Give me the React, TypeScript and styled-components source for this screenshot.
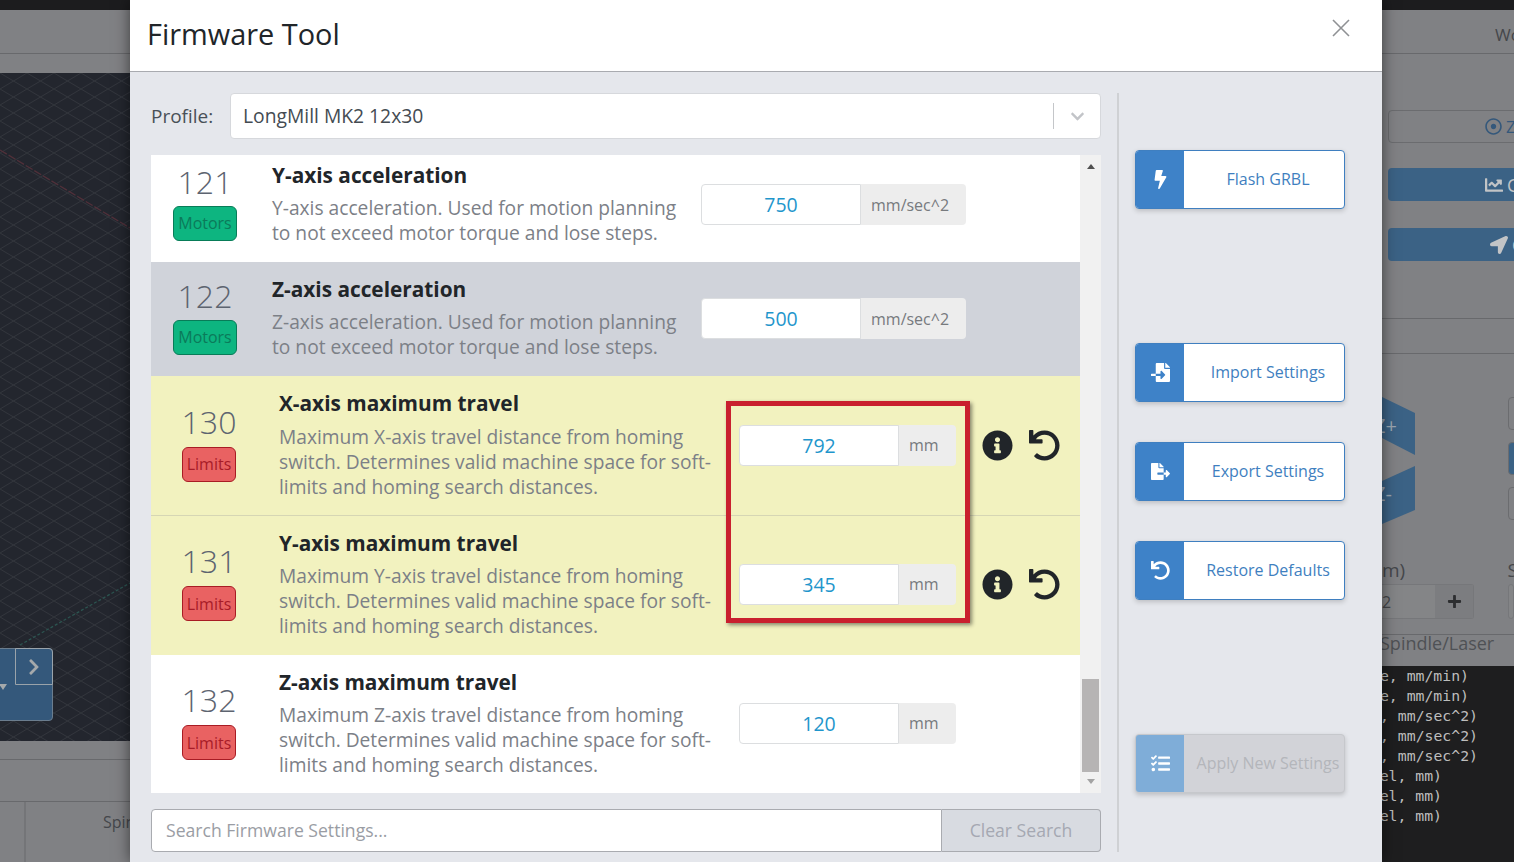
import React from 'react';
import styled, { createGlobalStyle } from 'styled-components';
import {
  FaBolt, FaFileImport, FaFileExport, FaUndo, FaTasks, FaInfoCircle,
  FaChevronRight, FaPlus, FaChartLine, FaLocationArrow, FaRegDotCircle, FaChevronDown,
} from 'react-icons/fa';

const GlobalStyle = createGlobalStyle`
  html, body { margin: 0; padding: 0; overflow: hidden; }
  body { font-family: "Open Sans", "Liberation Sans", sans-serif; background: #808184; }
  * { box-sizing: border-box; }
`;

const Page = styled.div`
  display: flex;
  width: 1514px;
  height: 862px;
  overflow: hidden;
`;

/* dimmed app behind the dialog */
const SidePane = styled.div<{ $width: number }>`
  width: ${p => p.$width}px;
  flex: none;
  display: flex;
  flex-direction: column;
  background: #808184;
  overflow: hidden;
  color: #45474b;
`;

const TopStrip = styled.div`
  height: 10px;
  flex: none;
  background: #1c1c1e;
`;

const PaneHeader = styled.div`
  height: 44px;
  flex: none;
  border-bottom: 1px solid #68696c;
  font-size: 17px;
  line-height: 50px;
  padding-left: 113px;
  white-space: nowrap;
`;

const PaneBand = styled.div`
  height: 19px;
  flex: none;
`;

const Canvas = styled.div`
  position: relative;
  height: 668px;
  flex: none;
  background: #23262e;
`;

const CanvasArt = styled.svg`
  display: block;
  width: 100%;
  height: 100%;
`;

const JogBox = styled.div`
  position: absolute;
  left: -8px;
  top: 575px;
  width: 61px;
  height: 73px;
  background: #34587b;
  border: 1px solid #6b7d8e;
  border-radius: 0 4px 4px 0;
`;

const JogCaret = styled.div`
  position: absolute;
  left: 6px;
  top: 35px;
  width: 0;
  height: 0;
  border: 4px solid transparent;
  border-bottom: none;
  border-top: 6px solid #a5a9ab;
`;

const JogButton = styled.div`
  position: absolute;
  right: -1px;
  top: -1px;
  width: 38px;
  height: 37px;
  display: flex;
  align-items: center;
  justify-content: center;
  background: #34587b;
  border: 1px solid #9aa3aa;
  border-radius: 0 4px 0 0;
  color: #a5a9ab;
  font-size: 18px;
`;

const BottomRail = styled.div`
  height: 19px;
  flex: none;
  border-bottom: 1px solid #68696c;
`;

const BottomMid = styled.div`
  height: 42px;
  flex: none;
  border-bottom: 1px solid #68696c;
`;

const BottomTabs = styled.div`
  flex: 1;
  display: flex;
  align-items: flex-start;
`;

const TabEdge = styled.div`
  width: 26px;
  height: 100%;
  flex: none;
  border-right: 2px solid #747578;
`;

const TabLabel = styled.div`
  margin: 9px 0 0 77px;
  font-size: 16px;
  white-space: nowrap;
`;

/* right pane parts */
const TargetButton = styled.div`
  margin: 56px 0 0 6px;
  width: 200px;
  height: 33px;
  flex: none;
  border: 1px solid #6b6c6f;
  border-radius: 4px;
  display: flex;
  align-items: center;
  padding-left: 96px;
  gap: 4px;
  font-size: 17px;
  color: #34587b;
`;

const ActionBar = styled.div<{ $top: number; $indent: number }>`
  margin: ${p => p.$top}px 0 0 6px;
  width: 200px;
  height: 33px;
  flex: none;
  background: #3b6285;
  border-radius: 4px;
  display: flex;
  align-items: center;
  padding-left: ${p => p.$indent}px;
  gap: 4px;
  font-size: 18px;
  color: #c2c4c6;
`;

const SectionBand = styled.div`
  margin-top: 57px;
  height: 36px;
  flex: none;
  border-top: 1px solid #68696c;
  border-bottom: 1px solid #68696c;
`;

const JogRow = styled.div`
  margin-top: 43px;
  display: flex;
  flex: none;
  height: 127px;
`;

const HexArt = styled.svg`
  width: 33px;
  height: 127px;
  flex: none;
`;

const SmallBoxes = styled.div`
  margin-left: 93px;
  display: flex;
  flex-direction: column;
  gap: 12px;
`;

const SmallBox = styled.div<{ $blue?: boolean }>`
  width: 30px;
  height: 33px;
  border: 1px solid #6b6c6f;
  border-radius: 4px;
  background: ${p => (p.$blue ? '#3b6285' : 'transparent')};
`;

const LabelRow = styled.div`
  margin: 34px 0 2px;
  width: 136px;
  display: flex;
  justify-content: space-between;
  font-size: 19px;
  line-height: 24px;
  flex: none;
`;

const FieldRow = styled.div`
  display: flex;
  flex: none;
  height: 35px;
`;

const SpinField = styled.div`
  width: 92px;
  flex: none;
  display: flex;
  border: 1px solid #76777a;
  border-left: none;
  border-radius: 0 3px 3px 0;
  background: #848587;
  font-size: 16px;
  align-items: center;
`;

const SpinValue = styled.div`
  flex: 1;
`;

const SpinPlus = styled.div`
  width: 38px;
  height: 100%;
  display: flex;
  align-items: center;
  justify-content: center;
  background: #7c7d80;
  color: #2d2e30;
  font-size: 15px;
`;

const OtherField = styled.div`
  margin-left: 34px;
  width: 20px;
  background: #848587;
  border: 1px solid #76777a;
  border-radius: 3px;
`;

const SpindleTab = styled.div`
  margin: 15px 0 0 -2px;
  height: 32px;
  flex: none;
  border-top: 1px solid #68696c;
  font-size: 18px;
  line-height: 16px;
  white-space: nowrap;
  color: #4f5155;
`;

const Console = styled.div`
  flex: 1;
  background: #1e1e1f;
  font-family: "DejaVu Sans Mono", "Liberation Mono", monospace;
  font-size: 14.8px;
  line-height: 20px;
  color: #bdbdbd;
`;

const ConsoleLine = styled.div<{ $end: number }>`
  display: flex;
  justify-content: flex-end;
  padding-right: ${p => p.$end}px;
  white-space: nowrap;
`;

/* the dialog */
const Modal = styled.div`
  position: relative;
  z-index: 2;
  flex: 1;
  height: 862px;
  display: flex;
  flex-direction: column;
  background: #e5e7ec;
  box-shadow: 0 0 14px rgba(0, 0, 0, 0.55);
`;

const ModalHeader = styled.div`
  height: 72px;
  flex: none;
  display: flex;
  align-items: center;
  justify-content: space-between;
  padding: 0 31px 2px 17px;
  background: #fff;
  border-bottom: 1px solid #a9abb0;
`;

const ModalTitle = styled.div`
  font-size: 28.9px;
  color: #212529;
  margin-top: -3px;
`;

const CloseIcon = styled.svg`
  width: 20px;
  height: 20px;
  margin-top: -14px;
`;

const ModalBody = styled.div`
  flex: 1;
  display: flex;
  padding: 21px 0 10px 21px;
`;

const MainColumn = styled.div`
  width: 950px;
  flex: none;
  display: flex;
  flex-direction: column;
  gap: 16px;
`;

const ProfileRow = styled.div`
  height: 46px;
  flex: none;
  display: flex;
  align-items: center;
`;

const ProfileLabel = styled.div`
  width: 79px;
  flex: none;
  font-size: 19px;
  color: #495057;
`;

const ProfileSelect = styled.div`
  flex: 1;
  height: 46px;
  display: flex;
  align-items: center;
  background: #fff;
  border: 1px solid #d6d8dc;
  border-radius: 4px;
  padding-left: 12px;
  font-size: 19.3px;
  color: #444b52;
`;

const SelectValue = styled.div`
  flex: 1;
  padding-bottom: 2px;
`;

const SelectSep = styled.div`
  width: 1px;
  height: 26px;
  background: #c4c6c9;
`;

const SelectCaret = styled.div`
  width: 46px;
  display: flex;
  justify-content: center;
  color: #c2c4c8;
  font-size: 15px;
`;

const ListFrame = styled.div`
  height: 638px;
  flex: none;
  display: flex;
`;

const RowList = styled.div`
  width: 929px;
  flex: none;
  overflow: hidden;
`;

const RowStack = styled.div`
  margin-top: -7px;
`;

const toneColors = { white: '#ffffff', gray: '#d0d3da', yellow: '#f2f2bf' };

const Row = styled.div<{ $tone: keyof typeof toneColors; $roomy?: boolean; $rule?: boolean }>`
  display: flex;
  align-items: center;
  background: ${p => toneColors[p.$tone]};
  padding: 12px 0 ${p => (p.$roomy ? 16 : 17)}px;
  border-top: ${p => (p.$rule ? '1px solid #d6d6b4' : 'none')};
`;

const IdCell = styled.div<{ $wide: boolean }>`
  width: ${p => (p.$wide ? 116 : 108)}px;
  flex: none;
  display: flex;
  flex-direction: column;
  align-items: center;
  gap: ${p => (p.$wide ? 3 : 2)}px;
  margin-top: ${p => (p.$wide ? -6 : -5)}px;
`;

const IdNumber = styled.div`
  font-size: 32px;
  line-height: 44px;
  font-weight: 300;
  color: #5d6470;
`;

const badgeColors = {
  Motors: { bg: '#0db580', edge: '#087c58', text: '#0b7a5a' },
  Limits: { bg: '#e96262', edge: '#a81c24', text: '#a81c28' },
};

const Badge = styled.div<{ $kind: keyof typeof badgeColors }>`
  height: 35px;
  padding: 0 4px;
  display: flex;
  align-items: center;
  border-radius: 6px;
  font-size: 16px;
  background: ${p => badgeColors[p.$kind].bg};
  border: 1px solid ${p => badgeColors[p.$kind].edge};
  color: ${p => badgeColors[p.$kind].text};
`;

const TextCell = styled.div<{ $wide: boolean }>`
  width: ${p => (p.$wide ? 436 : 418)}px;
  margin-left: ${p => (p.$wide ? 12 : 13)}px;
  flex: none;
`;

const RowTitle = styled.div<{ $roomy?: boolean }>`
  font-size: 20.8px;
  font-weight: 700;
  line-height: 30px;
  color: #212529;
  margin-bottom: ${p => (p.$roomy ? 6 : 5)}px;
`;

const RowDesc = styled.div`
  font-size: 19.2px;
  line-height: 25px;
  color: #7c8087;
`;

const FieldGroup = styled.div<{ $wide: boolean; $roomy?: boolean }>`
  margin-left: ${p => (p.$wide ? 24 : 11)}px;
  margin-top: ${p => (p.$roomy ? 3 : p.$wide ? 2 : 3)}px;
  display: flex;
  flex: none;
  height: 41px;
`;

const ValueBox = styled.div`
  width: 160px;
  display: flex;
  align-items: center;
  justify-content: center;
  background: #fff;
  border: 1px solid #dcdee0;
  border-radius: 4px 0 0 4px;
  font-size: 19.5px;
  color: #1f96cc;
`;

const UnitBox = styled.div<{ $wide: boolean }>`
  width: ${p => (p.$wide ? 57 : 105)}px;
  display: flex;
  align-items: center;
  padding: ${p => (p.$wide ? 0 : 2)}px 0 0 10px;
  background: #ededed;
  border-radius: 0 4px 4px 0;
  font-size: 16px;
  color: #777a7e;
`;

const RowActions = styled.div<{ $roomy?: boolean }>`
  margin: ${p => (p.$roomy ? 3 : 2)}px 0 0 26px;
  display: flex;
  align-items: center;
  gap: 16px;
  font-size: 31px;
  color: #212529;
`;

const ActionIcon = styled.div`
  display: flex;
`;

const Scrollbar = styled.div`
  width: 21px;
  flex: none;
  display: flex;
  flex-direction: column;
  align-items: center;
  background: #f1f1f1;
  padding-top: 9px;
`;

const ArrowUp = styled.div`
  width: 0;
  height: 0;
  border: 4px solid transparent;
  border-top: none;
  border-bottom: 5px solid #505050;
`;

const Thumb = styled.div`
  margin-top: auto;
  width: 17px;
  height: 93px;
  background: #b6b4b4;
`;

const ArrowDown = styled.div`
  margin: 7px 0 9px;
  width: 0;
  height: 0;
  border: 4px solid transparent;
  border-bottom: none;
  border-top: 5px solid #a3a3a3;
`;

const SearchRow = styled.div`
  height: 43px;
  flex: none;
  display: flex;
`;

const SearchBox = styled.div`
  flex: 1;
  display: flex;
  align-items: center;
  padding: 0 0 2px 14px;
  background: #fff;
  border: 1px solid #a9abb0;
  border-radius: 4px 0 0 4px;
  font-size: 17.6px;
  color: #9a9da4;
`;

const ClearButton = styled.div`
  width: 159px;
  display: flex;
  align-items: center;
  justify-content: center;
  padding-bottom: 2px;
  background: #d8dbe1;
  border: 1px solid #a9abb0;
  border-left: none;
  border-radius: 0 4px 4px 0;
  font-size: 17.6px;
  color: #a5a8b2;
`;

const ColumnRule = styled.div`
  width: 2px;
  flex: none;
  margin-left: 16px;
  background: #cfd1d4;
`;

const ButtonColumn = styled.div`
  margin-left: 16px;
  padding-top: 57px;
  display: flex;
  flex-direction: column;
  gap: 134px;
`;

const ButtonGroup = styled.div`
  display: flex;
  flex-direction: column;
  gap: 40px;
`;

const ToolButton = styled.div<{ $disabled?: boolean }>`
  width: 210px;
  height: 59px;
  display: flex;
  overflow: hidden;
  border-radius: 4px;
  border: 1px solid ${p => (p.$disabled ? '#c6c8cc' : '#3f7fc0')};
  background: ${p => (p.$disabled ? '#d2d3d8' : '#fff')};
  color: ${p => (p.$disabled ? '#b4b6bb' : '#3f7fc0')};
  box-shadow: 0 2px 5px rgba(0, 0, 0, 0.18);
  font-size: 16px;
`;

const ToolIcon = styled.div<{ $disabled?: boolean }>`
  width: 48px;
  flex: none;
  display: flex;
  align-items: center;
  justify-content: center;
  background: ${p => (p.$disabled ? '#7fadd8' : '#3e82c8')};
  color: #fff;
  font-size: 19px;
`;

const ToolLabel = styled.div`
  flex: 1;
  display: flex;
  align-items: center;
  justify-content: center;
  padding: 0 0 2px 8px;
  white-space: nowrap;
`;

/* annotation drawn over the screenshot */
const Highlight = styled.div`
  position: absolute;
  left: 596px;
  top: 401px;
  width: 244px;
  height: 222px;
  border: 5px solid #c9202e;
  box-shadow: 2px 2px 4px rgba(0, 0, 0, 0.45);
`;

const DESC_ACCEL = (axis: string) =>
  `${axis}-axis acceleration. Used for motion planning to not exceed motor torque and lose steps.`;
const DESC_TRAVEL = (axis: string) =>
  `Maximum ${axis}-axis travel distance from homing switch. Determines valid machine space for soft-limits and homing search distances.`;

type Setting = {
  id: number;
  title: string;
  desc: string;
  badge: 'Motors' | 'Limits';
  value: number;
  unit: string;
  tone: 'white' | 'gray' | 'yellow';
  rule?: boolean;
  roomy?: boolean;
};

const settings: Setting[] = [
  { id: 121, title: 'Y-axis acceleration', desc: DESC_ACCEL('Y'), badge: 'Motors', value: 750, unit: 'mm/sec^2', tone: 'white' },
  { id: 122, title: 'Z-axis acceleration', desc: DESC_ACCEL('Z'), badge: 'Motors', value: 500, unit: 'mm/sec^2', tone: 'gray' },
  { id: 130, title: 'X-axis maximum travel', desc: DESC_TRAVEL('X'), badge: 'Limits', value: 792, unit: 'mm', tone: 'yellow', roomy: true },
  { id: 131, title: 'Y-axis maximum travel', desc: DESC_TRAVEL('Y'), badge: 'Limits', value: 345, unit: 'mm', tone: 'yellow', rule: true },
  { id: 132, title: 'Z-axis maximum travel', desc: DESC_TRAVEL('Z'), badge: 'Limits', value: 120, unit: 'mm', tone: 'white' },
];

const SettingRow: React.FC<{ item: Setting }> = ({ item }) => {
  const wide = item.badge === 'Limits';
  return (
    <Row $tone={item.tone} $roomy={item.roomy} $rule={item.rule}>
      <IdCell $wide={wide}>
        <IdNumber>{item.id}</IdNumber>
        <Badge $kind={item.badge}>{item.badge}</Badge>
      </IdCell>
      <TextCell $wide={wide}>
        <RowTitle $roomy={item.roomy}>{item.title}</RowTitle>
        <RowDesc>{item.desc}</RowDesc>
      </TextCell>
      <FieldGroup $wide={wide} $roomy={item.roomy}>
        <ValueBox>{item.value}</ValueBox>
        <UnitBox $wide={wide}>{item.unit}</UnitBox>
      </FieldGroup>
      {item.tone === 'yellow' && (
        <RowActions $roomy={item.roomy}>
          <ActionIcon><FaInfoCircle /></ActionIcon>
          <ActionIcon><FaUndo /></ActionIcon>
        </RowActions>
      )}
    </Row>
  );
};

const consoleLines = [
  { text: 'e, mm/min)', end: 45 },
  { text: 'e, mm/min)', end: 45 },
  { text: ', mm/sec^2)', end: 36 },
  { text: ', mm/sec^2)', end: 36 },
  { text: ', mm/sec^2)', end: 36 },
  { text: 'el, mm)', end: 72 },
  { text: 'el, mm)', end: 72 },
  { text: 'el, mm)', end: 72 },
];

export default function App() {
  return (
    <Page>
      <GlobalStyle />
      <SidePane $width={130}>
        <TopStrip />
        <PaneHeader />
        <PaneBand />
        <Canvas>
          <CanvasArt viewBox="0 0 130 668" preserveAspectRatio="none">
            <defs>
              <pattern id="iso" width="27" height="16" patternUnits="userSpaceOnUse">
                <path d="M0 0L27 16M27 0L0 16" stroke="#32353c" strokeWidth="1" fill="none" />
              </pattern>
            </defs>
            <rect width="130" height="668" fill="url(#iso)" />
            <line x1="0" y1="77" x2="130" y2="155" stroke="#51303a" strokeWidth="1.3" strokeDasharray="8 2" />
            <line x1="20" y1="572" x2="130" y2="510" stroke="#2c5450" strokeWidth="1.3" strokeDasharray="3 2" />
          </CanvasArt>
          <JogBox>
            <JogCaret />
            <JogButton><FaChevronRight /></JogButton>
          </JogBox>
        </Canvas>
        <BottomRail />
        <BottomMid />
        <BottomTabs>
          <TabEdge />
          <TabLabel>Spin</TabLabel>
        </BottomTabs>
      </SidePane>

      <Modal>
        <ModalHeader>
          <ModalTitle>Firmware Tool</ModalTitle>
          <CloseIcon viewBox="0 0 20 20">
            <path d="M2 2L18 18M18 2L2 18" stroke="#8f9194" strokeWidth="1.6" fill="none" />
          </CloseIcon>
        </ModalHeader>
        <ModalBody>
          <MainColumn>
            <ProfileRow>
              <ProfileLabel>Profile:</ProfileLabel>
              <ProfileSelect>
                <SelectValue>LongMill MK2 12x30</SelectValue>
                <SelectSep />
                <SelectCaret><FaChevronDown /></SelectCaret>
              </ProfileSelect>
            </ProfileRow>
            <ListFrame>
              <RowList>
                <RowStack>
                  {settings.map(item => <SettingRow key={item.id} item={item} />)}
                </RowStack>
              </RowList>
              <Scrollbar>
                <ArrowUp />
                <Thumb />
                <ArrowDown />
              </Scrollbar>
            </ListFrame>
            <SearchRow>
              <SearchBox>Search Firmware Settings...</SearchBox>
              <ClearButton>Clear Search</ClearButton>
            </SearchRow>
          </MainColumn>
          <ColumnRule />
          <ButtonColumn>
            <ToolButton>
              <ToolIcon><FaBolt /></ToolIcon>
              <ToolLabel>Flash GRBL</ToolLabel>
            </ToolButton>
            <ButtonGroup>
              <ToolButton>
                <ToolIcon><FaFileImport /></ToolIcon>
                <ToolLabel>Import Settings</ToolLabel>
              </ToolButton>
              <ToolButton>
                <ToolIcon><FaFileExport /></ToolIcon>
                <ToolLabel>Export Settings</ToolLabel>
              </ToolButton>
              <ToolButton>
                <ToolIcon><FaUndo /></ToolIcon>
                <ToolLabel>Restore Defaults</ToolLabel>
              </ToolButton>
            </ButtonGroup>
            <ToolButton $disabled>
              <ToolIcon $disabled><FaTasks /></ToolIcon>
              <ToolLabel>Apply New Settings</ToolLabel>
            </ToolButton>
          </ButtonColumn>
        </ModalBody>
        <Highlight />
      </Modal>

      <SidePane $width={132}>
        <TopStrip />
        <PaneHeader>Wo</PaneHeader>
        <TargetButton><FaRegDotCircle />Z</TargetButton>
        <ActionBar $top={25} $indent={97}><FaChartLine />C</ActionBar>
        <ActionBar $top={27} $indent={102}><FaLocationArrow />G</ActionBar>
        <SectionBand />
        <JogRow>
          <HexArt viewBox="0 0 33 127">
            <polygon points="0,0 33,16 33,58 0,41" fill="#3b6285" />
            <polygon points="33,69 33,113 0,127 0,84" fill="#3b6285" />
            <text x="-8" y="36" fontSize="20" fill="#9aa6b2">Z+</text>
            <text x="-8" y="104" fontSize="20" fill="#9aa6b2">Z-</text>
          </HexArt>
          <SmallBoxes>
            <SmallBox />
            <SmallBox $blue />
            <SmallBox />
          </SmallBoxes>
        </JogRow>
        <LabelRow>
          <span>m)</span>
          <span>S</span>
        </LabelRow>
        <FieldRow>
          <SpinField>
            <SpinValue>2</SpinValue>
            <SpinPlus><FaPlus /></SpinPlus>
          </SpinField>
          <OtherField />
        </FieldRow>
        <SpindleTab>Spindle/Laser</SpindleTab>
        <Console>
          {consoleLines.map((line, i) => (
            <ConsoleLine key={i} $end={line.end}>{line.text}</ConsoleLine>
          ))}
        </Console>
      </SidePane>
    </Page>
  );
}
